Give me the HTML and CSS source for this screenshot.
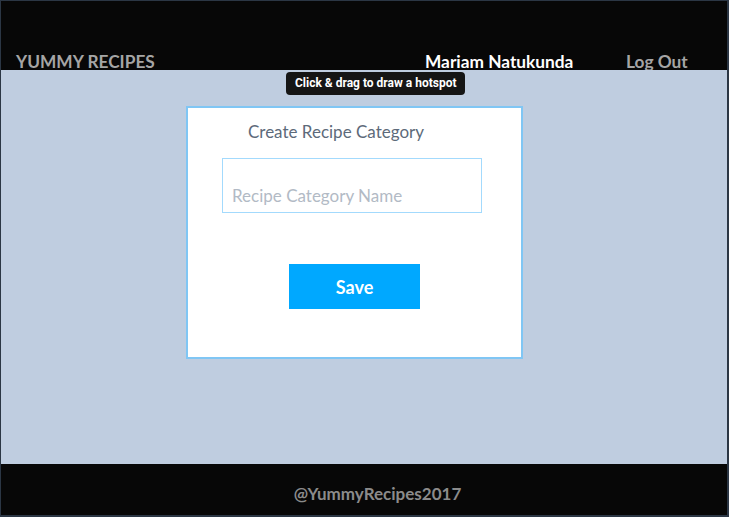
FILE: index.html
```html
<!DOCTYPE html>
<html>
<head>
<meta charset="utf-8">
<link rel="stylesheet" href="styles.css">
</head>
<body>
<div class="frame">
  <header class="topbar">
    <div class="brand">YUMMY RECIPES</div>
    <div class="user">Mariam Natukunda</div>
    <div class="logout">Log Out</div>
  </header>
  <main class="content">
    <div class="tooltip">Click &amp; drag to draw a hotspot</div>
    <form class="card">
      <h2 class="card-title">Create Recipe Category</h2>
      <div class="field"><span class="placeholder">Recipe Category Name</span></div>
      <button type="button" class="save">Save</button>
    </form>
  </main>
  <footer class="footer">@YummyRecipes2017</footer>
</div>
</body>
</html>
```
FILE: styles.css
```css
html, body {
  margin: 0;
  padding: 0;
  background: #2b3644;
}
body {
  width: 729px;
  height: 517px;
  overflow: hidden;
  font-family: Lato, "Open Sans", sans-serif;
}
.frame {
  box-sizing: border-box;
  width: 729px;
  height: 517px;
  border-top: 1px solid #2b3644;
  border-left: 1px solid #2b3644;
  border-right: 2px solid #2b3644;
  border-bottom: 2px solid #2b3644;
  display: flex;
  flex-direction: column;
}
.topbar {
  height: 69px;
  background: #070707;
  display: flex;
  align-items: flex-end;
  padding: 0 0 0 15px;
  box-sizing: border-box;
  font-size: 17.3px;
  font-weight: 700;
  line-height: 16px;
}
.brand {
  color: #a5a5a5;
  width: 409px;
}
.user {
  color: #ffffff;
  width: 201px;
}
.logout {
  color: #a5a5a5;
}
.content {
  flex: 1;
  background: #bfcde0;
  position: relative;
  padding-top: 36px;
  padding-left: 185px;
}
.tooltip {
  position: absolute;
  left: 285px;
  top: 2px;
  background: #151515;
  color: #fff;
  font-family: Roboto, sans-serif;
  font-weight: 700;
  font-size: 12px;
  line-height: 23px;
  padding: 0 9px;
  border-radius: 4px;
}
.card {
  box-sizing: border-box;
  width: 337px;
  height: 253px;
  background: #fff;
  border: 2px solid #80c6f4;
  margin: 0;
  display: flex;
  flex-direction: column;
  align-items: flex-start;
}
.card-title {
  margin: 13px 0 0 60px;
  font-size: 17px;
  font-weight: 400;
  line-height: 22px;
  color: #5d6a7a;
}
.field {
  box-sizing: border-box;
  margin: 15px 0 0 34px;
  width: 260px;
  height: 55px;
  border: 1px solid #a3dafd;
  display: flex;
  align-items: flex-end;
  padding: 0 0 5px 9px;
}
.placeholder {
  color: #b2bac5;
  font-size: 17px;
  line-height: 22px;
}
.save {
  margin: 51px 0 0 101px;
  width: 131px;
  height: 45px;
  background: #00a8ff;
  border: none;
  color: #fff;
  font-family: Lato, sans-serif;
  font-weight: 700;
  font-size: 18px;
  padding: 0;
}
.footer {
  height: 51px;
  background: #070707;
  color: #8b8b8b;
  font-weight: 700;
  font-size: 17px;
  text-align: center;
  line-height: 20px;
  padding-top: 20px;
  box-sizing: border-box;
  padding-left: 27px;
}
```
